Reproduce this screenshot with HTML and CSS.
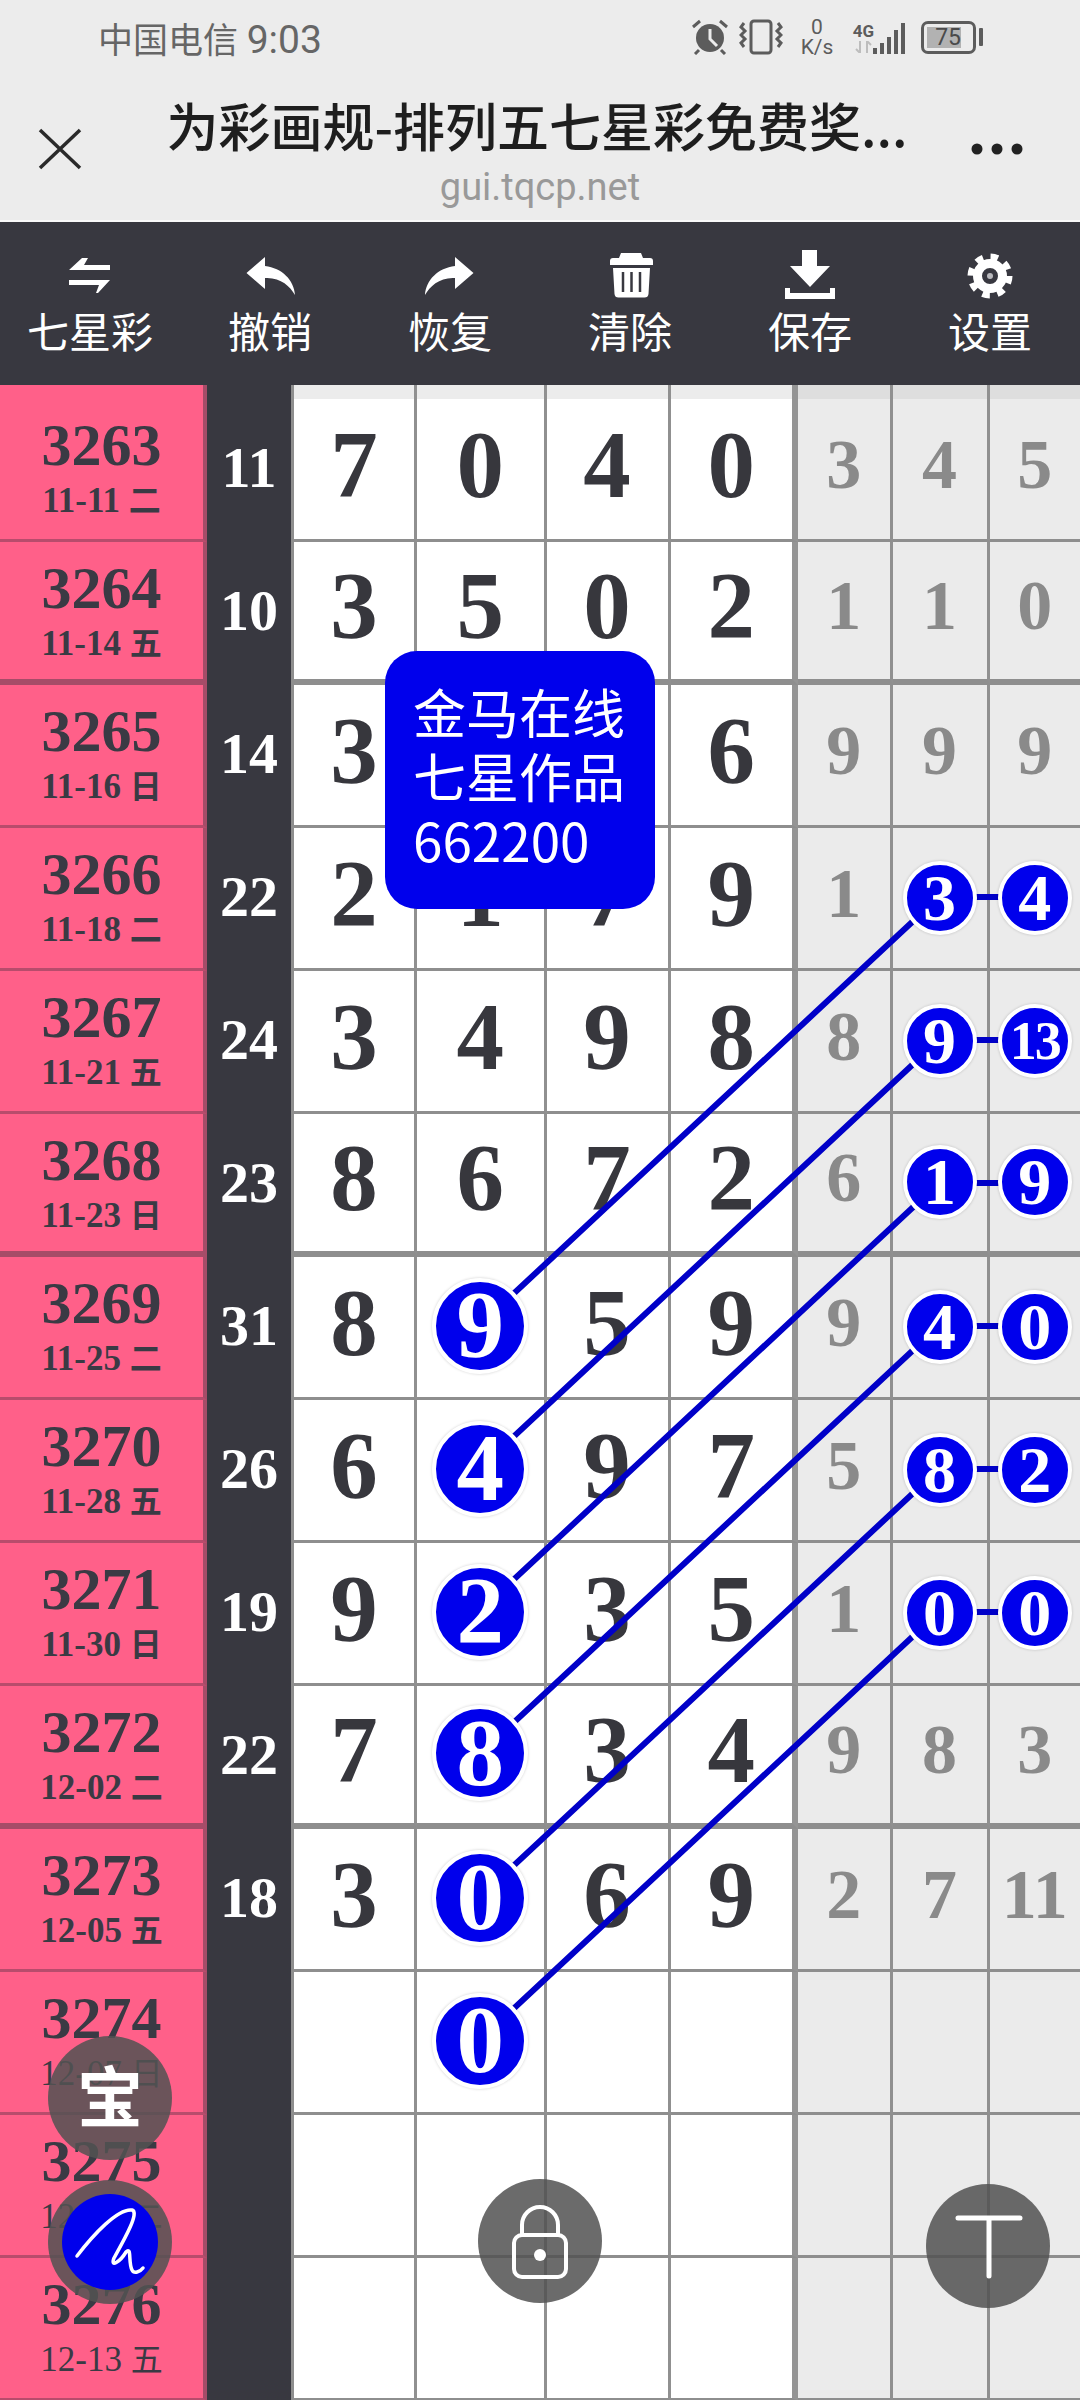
FILE: index.html
```html
<!DOCTYPE html>
<html lang="zh-CN">
<head>
<meta charset="utf-8">
<title>七星彩</title>
<link rel="stylesheet" href="styles.css">
</head>
<body>
<div class="page">
  <header class="top">
    <div class="status">
      <span class="carrier">中国电信 <span class="clock">9:03</span></span>
      <div class="status-icons">
        <svg class="ic-alarm" viewBox="0 0 36 36"><circle cx="18" cy="19" r="14" fill="#5c5c5c"/><path d="M18 10v10l7 7" fill="none" stroke="#ececec" stroke-width="3"/><path d="M1 8l7-6M35 8l-7-6M7 31l-4 4M29 31l4 4" stroke="#5c5c5c" stroke-width="3"/></svg>
        <svg class="ic-vib" viewBox="0 0 44 36"><rect x="12" y="2" width="20" height="32" rx="3" fill="none" stroke="#5c5c5c" stroke-width="3"/><path d="M5 4l-3 4 4 4-4 4 4 4-4 4 3 4M39 4l3 4-4 4 4 4-4 4 4 4-3 4" fill="none" stroke="#5c5c5c" stroke-width="3"/></svg>
        <div class="speed"><span class="speed-val">0</span><span class="speed-unit">K/s</span></div>
        <div class="net">
          <span class="net-type">4G</span>
          <svg class="ic-arrows" viewBox="0 0 18 12"><path d="M5 0v12M5 12L1 8M12 12V0M12 0l4 4" fill="none" stroke="#bdbdbd" stroke-width="2"/></svg>
        </div>
        <svg class="ic-signal" viewBox="0 0 34 34"><g fill="#5c5c5c"><rect x="0" y="26" width="4" height="6"/><rect x="7" y="21" width="4" height="11"/><rect x="14" y="15" width="4" height="17"/><rect x="21" y="8" width="4" height="24"/><rect x="28" y="1" width="4" height="31"/></g></svg>
        <div class="battery"><span class="battery-fill">75</span></div>
        <span class="battery-nub"></span>
      </div>
    </div>
    <div class="titlebar">
      <svg class="ic-close" viewBox="0 0 44 42"><path d="M2 2l40 38M42 2L2 40" stroke="#2a2a2a" stroke-width="3.5" fill="none"/></svg>
      <div class="title-wrap">
        <div class="title">为彩画规-排列五七星彩免费奖...</div>
        <div class="domain">gui.tqcp.net</div>
      </div>
      <svg class="ic-more" viewBox="0 0 54 14"><circle cx="7" cy="7" r="5.5" fill="#222"/><circle cx="27" cy="7" r="5.5" fill="#222"/><circle cx="47" cy="7" r="5.5" fill="#222"/></svg>
    </div>
  </header>

  <nav class="toolbar">
    <div class="tool">
      <svg class="tool-ic" viewBox="0 0 60 50"><path d="M22 8L9 20H50V15H24L28 8Z" fill="#fff"/><path d="M9 30H50L38 43H36L39 35H9Z" fill="#fff"/></svg>
      <span>七星彩</span>
    </div>
    <div class="tool">
      <svg class="tool-ic" viewBox="0 0 60 50"><path d="M6.5 23L25 7V16C42 18 54 30 55 45 50 36 40 27 25 28V39Z" fill="#fff"/></svg>
      <span>撤销</span>
    </div>
    <div class="tool">
      <svg class="tool-ic" viewBox="0 0 60 50"><path d="M53.500 23L35 7V16C18 18 6 30 5 45 10 36 20 27 35 28V39Z" fill="#fff"/></svg>
      <span>恢复</span>
    </div>
    <div class="tool">
      <svg class="tool-ic" viewBox="0 0 60 50"><path d="M21 3H41L43 8H50Q53 8 53 11V15H10V11Q10 8 13 8H19Z" fill="#fff"/><path d="M13 18h37l-1.500 26a4 4 0 0 1-4 3.500H18.500a4 4 0 0 1-4-3.500z" fill="#fff"/><path d="M23 22v20M31.500 22v20M40 22v20" stroke="#383840" stroke-width="2.500"/></svg>
      <span>清除</span>
    </div>
    <div class="tool">
      <svg class="tool-ic" viewBox="0 0 60 50"><path d="M22 0h15v16h13L30 37 10 16h12z" fill="#fff"/><path d="M5 38v11h50V38h-5v5H10v-5z" fill="#fff"/></svg>
      <span>保存</span>
    </div>
    <div class="tool">
      <svg class="tool-ic" viewBox="0 0 60 50"><circle cx="30" cy="26" r="19" fill="none" stroke="#fff" stroke-width="7" stroke-dasharray="7.400 7.520"/><circle cx="30" cy="26" r="12.500" fill="none" stroke="#fff" stroke-width="9"/><circle cx="30" cy="26" r="3" fill="#b9b9bd"/></svg>
      <span>设置</span>
    </div>
  </nav>

  <main class="board">
    <div class="row row--edge">
      <div class="issue"></div><div class="sum"></div><div class="cell"></div><div class="cell"></div><div class="cell"></div><div class="cell cell--sep"></div><div class="cell cell--miss"></div><div class="cell cell--miss"></div><div class="cell cell--miss cell--last"></div>
    </div>

    <div class="row">
      <div class="issue"><b class="issue-no">3263</b><span class="issue-date">11-11 <i>二</i></span></div>
      <div class="sum">11</div>
      <div class="cell">7</div><div class="cell">0</div><div class="cell">4</div><div class="cell cell--sep">0</div>
      <div class="cell cell--miss">3</div><div class="cell cell--miss">4</div><div class="cell cell--miss cell--last">5</div>
    </div>
    <div class="row row--major">
      <div class="issue"><b class="issue-no">3264</b><span class="issue-date">11-14 <i>五</i></span></div>
      <div class="sum">10</div>
      <div class="cell">3</div><div class="cell">5</div><div class="cell">0</div><div class="cell cell--sep">2</div>
      <div class="cell cell--miss">1</div><div class="cell cell--miss">1</div><div class="cell cell--miss cell--last">0</div>
    </div>
    <div class="row">
      <div class="issue"><b class="issue-no">3265</b><span class="issue-date">11-16 <i>日</i></span></div>
      <div class="sum">14</div>
      <div class="cell">3</div><div class="cell"></div><div class="cell"></div><div class="cell cell--sep">6</div>
      <div class="cell cell--miss">9</div><div class="cell cell--miss">9</div><div class="cell cell--miss cell--last">9</div>
    </div>
    <div class="row">
      <div class="issue"><b class="issue-no">3266</b><span class="issue-date">11-18 <i>二</i></span></div>
      <div class="sum">22</div>
      <div class="cell">2</div><div class="cell">1</div><div class="cell">7</div><div class="cell cell--sep">9</div>
      <div class="cell cell--miss">1</div><div class="cell cell--miss"><span class="ball">3</span></div><div class="cell cell--miss cell--last"><span class="ball">4</span></div>
    </div>
    <div class="row">
      <div class="issue"><b class="issue-no">3267</b><span class="issue-date">11-21 <i>五</i></span></div>
      <div class="sum">24</div>
      <div class="cell">3</div><div class="cell">4</div><div class="cell">9</div><div class="cell cell--sep">8</div>
      <div class="cell cell--miss">8</div><div class="cell cell--miss"><span class="ball">9</span></div><div class="cell cell--miss cell--last"><span class="ball ball--wide">13</span></div>
    </div>
    <div class="row row--major">
      <div class="issue"><b class="issue-no">3268</b><span class="issue-date">11-23 <i>日</i></span></div>
      <div class="sum">23</div>
      <div class="cell">8</div><div class="cell">6</div><div class="cell">7</div><div class="cell cell--sep">2</div>
      <div class="cell cell--miss">6</div><div class="cell cell--miss"><span class="ball">1</span></div><div class="cell cell--miss cell--last"><span class="ball">9</span></div>
    </div>
    <div class="row">
      <div class="issue"><b class="issue-no">3269</b><span class="issue-date">11-25 <i>二</i></span></div>
      <div class="sum">31</div>
      <div class="cell">8</div><div class="cell"><span class="ball ball--big">9</span></div><div class="cell">5</div><div class="cell cell--sep">9</div>
      <div class="cell cell--miss">9</div><div class="cell cell--miss"><span class="ball">4</span></div><div class="cell cell--miss cell--last"><span class="ball">0</span></div>
    </div>
    <div class="row">
      <div class="issue"><b class="issue-no">3270</b><span class="issue-date">11-28 <i>五</i></span></div>
      <div class="sum">26</div>
      <div class="cell">6</div><div class="cell"><span class="ball ball--big">4</span></div><div class="cell">9</div><div class="cell cell--sep">7</div>
      <div class="cell cell--miss">5</div><div class="cell cell--miss"><span class="ball">8</span></div><div class="cell cell--miss cell--last"><span class="ball">2</span></div>
    </div>
    <div class="row">
      <div class="issue"><b class="issue-no">3271</b><span class="issue-date">11-30 <i>日</i></span></div>
      <div class="sum">19</div>
      <div class="cell">9</div><div class="cell"><span class="ball ball--big">2</span></div><div class="cell">3</div><div class="cell cell--sep">5</div>
      <div class="cell cell--miss">1</div><div class="cell cell--miss"><span class="ball">0</span></div><div class="cell cell--miss cell--last"><span class="ball">0</span></div>
    </div>
    <div class="row row--major">
      <div class="issue"><b class="issue-no">3272</b><span class="issue-date">12-02 <i>二</i></span></div>
      <div class="sum">22</div>
      <div class="cell">7</div><div class="cell"><span class="ball ball--big">8</span></div><div class="cell">3</div><div class="cell cell--sep">4</div>
      <div class="cell cell--miss">9</div><div class="cell cell--miss">8</div><div class="cell cell--miss cell--last">3</div>
    </div>
    <div class="row">
      <div class="issue"><b class="issue-no">3273</b><span class="issue-date">12-05 <i>五</i></span></div>
      <div class="sum">18</div>
      <div class="cell">3</div><div class="cell"><span class="ball ball--big">0</span></div><div class="cell">6</div><div class="cell cell--sep">9</div>
      <div class="cell cell--miss">2</div><div class="cell cell--miss">7</div><div class="cell cell--miss cell--last">11</div>
    </div>
    <div class="row row--pending">
      <div class="issue"><b class="issue-no">3274</b><span class="issue-date">12-07 <i>日</i></span></div>
      <div class="sum"></div>
      <div class="cell"></div><div class="cell"><span class="ball ball--big">0</span></div><div class="cell"></div><div class="cell cell--sep"></div>
      <div class="cell cell--miss"></div><div class="cell cell--miss"></div><div class="cell cell--miss cell--last"></div>
    </div>
    <div class="row row--pending">
      <div class="issue"><b class="issue-no">3275</b><span class="issue-date">12-09 <i>二</i></span></div>
      <div class="sum"></div>
      <div class="cell"></div><div class="cell"></div><div class="cell"></div><div class="cell cell--sep"></div>
      <div class="cell cell--miss"></div><div class="cell cell--miss"></div><div class="cell cell--miss cell--last"></div>
    </div>
    <div class="row row--pending">
      <div class="issue"><b class="issue-no">3276</b><span class="issue-date">12-13 <i>五</i></span></div>
      <div class="sum"></div>
      <div class="cell"></div><div class="cell"></div><div class="cell"></div><div class="cell cell--sep"></div>
      <div class="cell cell--miss"></div><div class="cell cell--miss"></div><div class="cell cell--miss cell--last"></div>
    </div>

    <!-- pick links between the circled numbers -->
    <svg class="links" viewBox="0 0 1080 2015">
      <g stroke="#0000c8" stroke-width="6" fill="none">
        <path d="M939 512L480 940M939 655L480 1083M939 798L480 1226M939 941L480 1369M939 1084L480 1512M939 1227L480 1655"/>
        <path d="M939 512H1034M939 655H1034M939 798H1034M939 941H1034M939 1084H1034M939 1227H1034"/>
      </g>
    </svg>

    <aside class="promo">金马在线<br>七星作品<br>662200</aside>
  </main>

  <!-- floating tools -->
  <button class="fab fab--treasure">宝</button>
  <button class="fab fab--pen">
    <svg viewBox="0 0 124 124"><circle cx="62" cy="62" r="48" fill="#0000ec"/><path d="M29 76C45 55 70 28 84 30 92 32 76 60 66 78 62 88 72 82 78 72 84 66 80 82 84 90 86 94 92 92 95 88" fill="none" stroke="#fff" stroke-width="3.500" stroke-linecap="round"/></svg>
  </button>
  <button class="fab fab--lock">
    <svg viewBox="0 0 124 124"><rect x="36" y="56" width="52" height="42" rx="8" fill="none" stroke="#fff" stroke-width="4"/><path d="M44 56V46a18 18 0 0 1 36 0V56" fill="none" stroke="#fff" stroke-width="4"/><circle cx="62" cy="76" r="6" fill="#fff"/></svg>
  </button>
  <button class="fab fab--text">
    <svg viewBox="0 0 124 124"><path d="M32 34H94M63 34V92" fill="none" stroke="#fff" stroke-width="5" stroke-linecap="round"/></svg>
  </button>
</div>
</body>
</html>
```

FILE: styles.css
```css
* { box-sizing: border-box; }

html, body {
  margin: 0;
  padding: 0;
  background: #fff;
}

.page {
  position: relative;
  width: 1080px;
  height: 2400px;
  overflow: hidden;
  display: flex;
  flex-direction: column;
  font-family: "Noto Sans CJK SC", "Noto Sans", sans-serif;
}

/* browser chrome */
.top {
  height: 222px;
  flex: none;
  background: #ececec;
  border-bottom: 2px solid #fafafa;
}

.status {
  height: 78px;
  display: flex;
  align-items: center;
  justify-content: space-between;
  padding: 0 97px 4px 98px;
}

.carrier {
  font-family: "Roboto", "Noto Sans CJK SC", sans-serif;
  font-size: 35px;
  color: #666;
  white-space: nowrap;
}
.clock { font-size: 39px; }

.status-icons {
  display: flex;
  align-items: center;
  height: 40px;
}

.ic-alarm { width: 36px; height: 36px; }
.ic-vib { width: 44px; height: 36px; margin-left: 11px; }

.speed {
  display: flex;
  flex-direction: column;
  align-items: center;
  width: 40px;
  margin-left: 14px;
  font-family: "Roboto", sans-serif;
  color: #5c5c5c;
  line-height: 20px;
}
.speed-val { font-size: 21px; }
.speed-unit { font-size: 21px; }

.net {
  display: flex;
  flex-direction: column;
  width: 19px;
  margin-left: 17px;
  align-items: center;
}
.net-type {
  font-family: "Roboto", sans-serif;
  font-weight: 700;
  font-size: 17px;
  line-height: 20px;
  color: #5c5c5c;
}
.ic-arrows { width: 18px; height: 12px; }
.ic-signal { width: 34px; height: 34px; margin-left: 0; align-self: flex-end; margin-bottom: 1px; }

.battery {
  width: 55px;
  height: 33px;
  margin-left: 14px;
  border: 3px solid #5c5c5c;
  border-radius: 7px;
  padding: 3px;
}
.battery-fill {
  display: block;
  width: 34px;
  height: 21px;
  background: #b2b2b2;
  font-family: "Roboto", sans-serif;
  font-size: 23px;
  line-height: 21px;
  text-align: right;
  color: #4a4a4a;
}
.battery-nub {
  width: 4px;
  height: 18px;
  margin-left: 3px;
  background: #5c5c5c;
  border-radius: 1px;
}

.titlebar {
  display: grid;
  grid-template-columns: 120px 1fr 120px;
  align-items: center;
  height: 142px;
}
.ic-close { width: 44px; height: 42px; margin-left: 38px; }
.ic-more { width: 54px; height: 14px; margin-left: 10px; }

.title-wrap {
  text-align: center;
  padding-top: 3px;
}
.title {
  font-size: 52px;
  line-height: 64px;
  font-weight: 500;
  color: #1e1e1e;
  white-space: nowrap;
  margin-left: -6px;
}
.domain {
  font-family: "Roboto", sans-serif;
  font-size: 38px;
  line-height: 44px;
  color: #999;
  margin-top: 8px;
}

/* tool strip */
.toolbar {
  flex: none;
  height: 163px;
  background: #383840;
  display: grid;
  grid-template-columns: repeat(6, 1fr);
}

.tool {
  display: flex;
  flex-direction: column;
  align-items: center;
  color: #fff;
  font-size: 42px;
  line-height: 46px;
  padding-top: 28px;
}
.tool span { margin-top: 7px; }
.tool-ic { width: 60px; height: 50px; overflow: visible; }

/* chart */
.board {
  position: relative;
  flex: 1;
  overflow: hidden;
  background: #fff;
}

.row {
  display: grid;
  grid-template-columns: 207px 87px 123px 129.5px 124px 127.5px 94.5px 97px 90.5px;
  height: 143px;
  font-family: "Liberation Serif", "Noto Sans CJK SC", serif;
  font-weight: 700;
}
.row--edge { height: 13.5px; }
.row--edge .cell { background: #ececec; }
.row--edge .cell--miss { background: #dedede; }

.issue {
  display: flex;
  flex-direction: column;
  align-items: center;
  padding-top: 16px;
  background: #ff6089;
  border-right: 4px solid #a64c68;
  border-bottom: 3px solid #b84c6c;
  color: #3a3a44;
}
.issue-no {
  font-size: 60px;
  line-height: 60px;
}
.issue-date {
  font-size: 35px;
  line-height: 40px;
  margin-top: 6px;
  white-space: nowrap;
}
.issue-date i {
  font-style: normal;
  font-size: 32px;
}

.sum {
  display: flex;
  align-items: center;
  justify-content: center;
  padding-bottom: 6px;
  background: #383840;
  border-right: 3px solid #8e8e8e;
  color: #fff;
  font-size: 58px;
}

.cell {
  display: flex;
  align-items: center;
  justify-content: center;
  padding-bottom: 8px;
  background: #fff;
  border-right: 3px solid #909090;
  border-bottom: 3px solid #8e8e8e;
  color: #37373d;
  font-size: 95px;
}
.cell--sep { border-right-width: 6px; border-right-color: #949494; }
.cell--last { border-right: 0; }
.cell--miss {
  background: #ebebeb;
  color: #8a8a8a;
  font-size: 70px;
}

.row--major .issue { border-bottom-width: 6px; border-bottom-color: #a64c68; }
.row--major .cell { border-bottom-width: 6px; }

.row--pending { font-weight: 400; }

.ball {
  position: relative;
  z-index: 2;
  flex: none;
  width: 74px;
  height: 74px;
  display: flex;
  align-items: center;
  justify-content: center;
  margin-top: 8px;
  border: 4px solid #fff;
  border-radius: 50%;
  background: #0000ec;
  box-shadow: 0 0 3px rgba(0, 0, 0, .2);
  color: #fff;
  font-family: "Liberation Serif", serif;
  font-weight: 700;
  font-size: 66px;
  line-height: 1;
}
.ball--wide { font-size: 54px; letter-spacing: -2px; }
.ball--big {
  width: 96px;
  height: 96px;
  font-size: 95px;
  margin-top: 6px;
}

.links {
  position: absolute;
  left: 0;
  top: 0;
  width: 1080px;
  height: 2015px;
  z-index: 1;
}

.promo {
  position: absolute;
  z-index: 3;
  left: 385px;
  top: 266px;
  width: 270px;
  height: 258px;
  padding: 28px 0 0 28px;
  border-radius: 32px;
  background: #0000ec;
  color: #fff;
  font-family: "Noto Sans CJK SC", "Noto Sans", sans-serif;
  font-size: 53px;
  line-height: 64px;
}

/* floating round buttons */
.fab {
  position: absolute;
  z-index: 4;
  width: 124px;
  height: 124px;
  padding: 0;
  border: 0;
  border-radius: 50%;
  background: rgba(83, 83, 83, .86);
  color: #fff;
  display: flex;
  align-items: center;
  justify-content: center;
}
.fab svg { width: 124px; height: 124px; display: block; }
.fab--treasure {
  left: 48px;
  top: 2036px;
  padding-bottom: 10px;
  font-family: "Noto Sans CJK SC", sans-serif;
  font-weight: 700;
  font-size: 66px;
}
.fab--pen { left: 48px; top: 2180px; }
.fab--lock { left: 478px; top: 2179px; }
.fab--text { left: 926px; top: 2184px; }
```
